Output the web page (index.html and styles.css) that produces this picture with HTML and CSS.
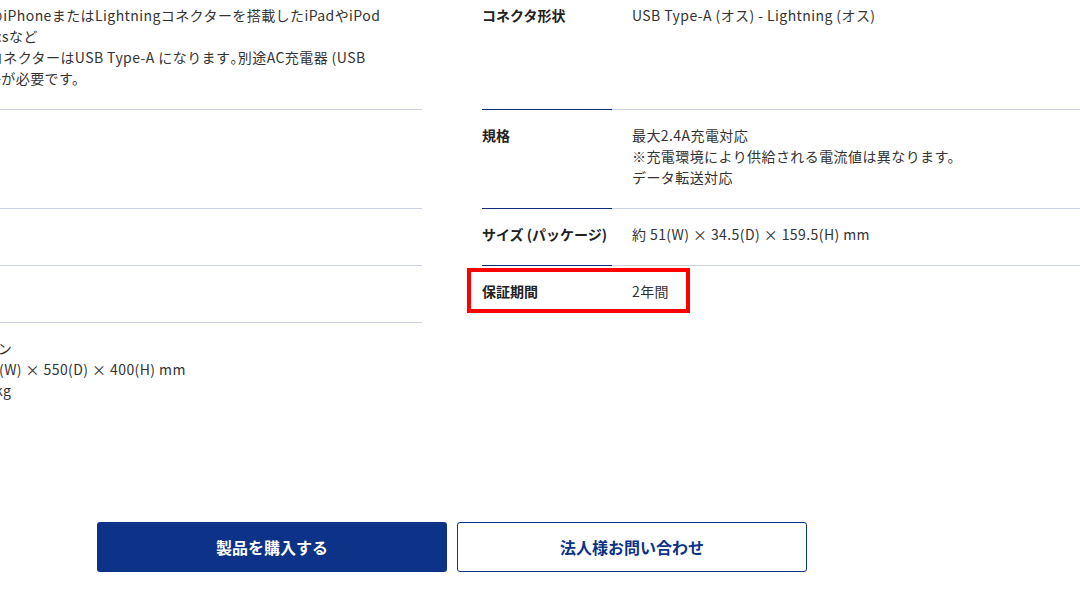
FILE: index.html
```html
<!DOCTYPE html>
<html lang="ja">
<head>
<meta charset="utf-8">
<title>製品仕様</title>
<link rel="stylesheet" href="styles.css">
</head>
<body>
<div class="page">
  <div class="spec">
    <div class="row">
      <div class="label">対応機種</div>
      <div class="value">搭載のiPhoneまたはLightningコネクターを搭載したiPadやiPod<br>各Macsなど<br>出力コネクターはUSB Type-A になります<span class="halt">。</span>別途AC充電器 (USB<br>A 端子が必要です。</div>
    </div>
    <div class="row">
      <div class="label">コネクタ形状</div>
      <div class="value">USB Type-A (オス) - Lightning (オス)</div>
    </div>
    <div class="row">
      <div class="label">ケーブル長</div>
      <div class="value">1m</div>
    </div>
    <div class="row">
      <div class="label">規格</div>
      <div class="value">最大2.4A充電対応<br>※充電環境により供給される電流値は異なります。<br>データ転送対応</div>
    </div>
    <div class="row">
      <div class="label">カラー</div>
      <div class="value">白</div>
    </div>
    <div class="row">
      <div class="label">サイズ (パッケージ)</div>
      <div class="value">約 51(W) × 34.5(D) × 159.5(H) mm</div>
    </div>
    <div class="row">
      <div class="label">重量</div>
      <div class="value">30g</div>
    </div>
    <div class="row row-last">
      <div class="label">保証期間</div>
      <div class="value">2年間</div>
      <span class="highlight"></span>
    </div>
    <div class="row row-last">
      <div class="label">梱包</div>
      <div class="value">Aライン<br>約600(W) × 550(D) × 400(H) mm<br>約3.5kg</div>
    </div>
  </div>
  <div class="actions">
    <a class="btn btn-primary" href="#">製品を購入する</a>
    <a class="btn btn-outline" href="#">法人様お問い合わせ</a>
  </div>
</div>
</body>
</html>
```
FILE: styles.css
```css
html, body {
  margin: 0;
  padding: 0;
  background: #ffffff;
  overflow: hidden;
}
body {
  width: 1080px;
  height: 608px;
  font-family: "Noto Sans CJK JP", "Noto Sans", sans-serif;
  font-size: 14px;
  line-height: 21px;
  color: #333333;
}
.page {
  width: 1284px;
  margin-left: -190px;
}
.spec {
  display: grid;
  grid-template-columns: 612px 612px;
  column-gap: 60px;
  margin-top: -10px;
}
.row {
  display: flex;
  position: relative;
}
.label {
  width: 130px;
  flex: none;
  padding: 15px 0 20px;
  font-weight: 700;
  color: #222222;
  border-bottom: 1px solid #0d2f7c;
  white-space: nowrap;
}
.value {
  flex: 1;
  padding: 15px 0 20px 20px;
  border-bottom: 1px solid #cdd3e3;
  white-space: nowrap;
  letter-spacing: 0.03em;
}
.halt {
  font-feature-settings: "halt";
}
.row-last .label,
.row-last .value {
  border-bottom: none;
}
.highlight {
  position: absolute;
  left: -15px;
  top: 2px;
  width: 215px;
  height: 37px;
  border: 4px solid #ff0000;
  pointer-events: none;
}
.actions {
  display: flex;
  justify-content: center;
  gap: 10px;
  margin-top: 101px;
}
.btn {
  box-sizing: border-box;
  width: 350px;
  height: 50px;
  display: flex;
  align-items: center;
  justify-content: center;
  border-radius: 3px;
  font-size: 16px;
  font-weight: 700;
  text-decoration: none;
}
.btn-primary {
  background: #0c3387;
  color: #ffffff;
}
.btn-outline {
  background: #ffffff;
  color: #0c3387;
  border: 1px solid #0c3387;
}
```
